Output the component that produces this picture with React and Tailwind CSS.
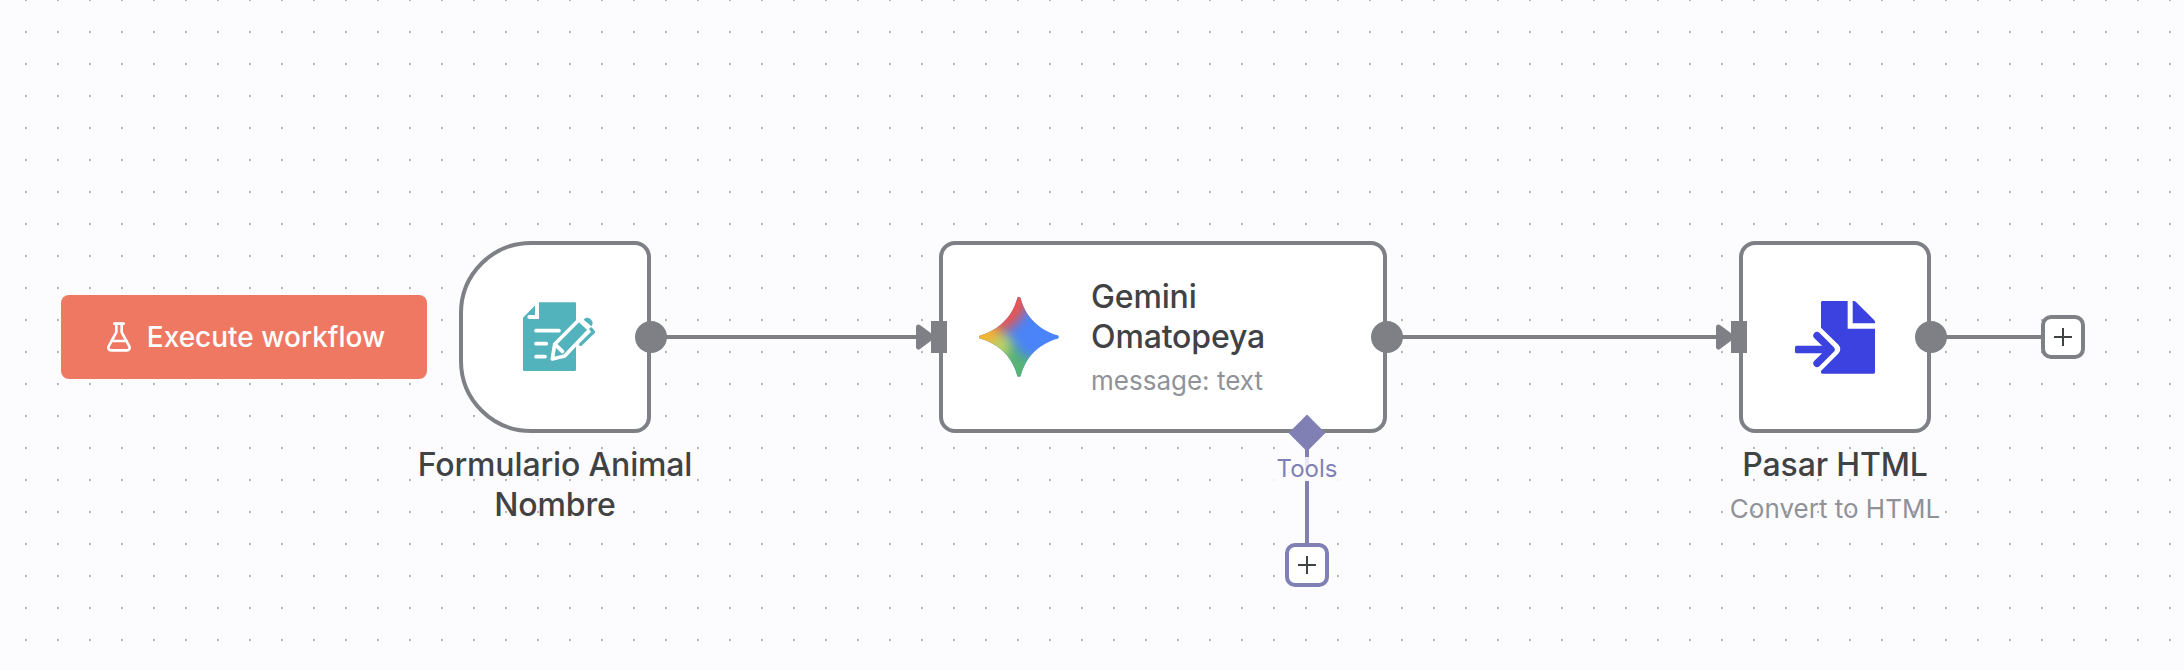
import React from 'react';
import { FlaskConical } from 'lucide-react';

function FormIcon() {
  return (
    <svg className="size-20 shrink-0" viewBox="0 0 240 240" fill="none">
      <path d="M24 62 62 23V16H180q3 0 3 3V218q0 4-4 4H28q-4 0-4-4Z" fill="#53b3bc" />
      <path d="M66 8V60H43" stroke="#fff" strokeWidth="12" strokeLinecap="round" />
      <path d="M63 101H132M63 140H94M63 179H90" stroke="#fff" strokeWidth="11" strokeLinecap="round" />
      <path d="M119 142 192 68 224 98 149 177 112 186Z" fill="#53b3bc" stroke="#fff" strokeWidth="11" strokeLinejoin="round" />
      <path d="M124 146 142 163" stroke="#fff" strokeWidth="12" strokeLinecap="round" />
      <path d="M197 73 217 92" stroke="#fff" strokeWidth="9" />
      <path d="M206 68C212 61 220 61 227 67 234 74 235 81 229 88Z" fill="#53b3bc" />
      <path d="M218 83 229 94 196 131" stroke="#fff" strokeWidth="6" />
      <path d="M228 96 235 105 197 142" stroke="#53b3bc" strokeWidth="10" strokeLinecap="round" strokeLinejoin="round" />
    </svg>
  );
}

function GeminiIcon() {
  return (
    <svg className="size-20 shrink-0" viewBox="0 0 65 65">
      <defs>
        <clipPath id="star">
          <path d="M32.447 0c.68 0 1.273.465 1.439 1.125a38.904 38.904 0 001.999 5.905c2.152 5 5.105 9.376 8.854 13.125 3.751 3.75 8.126 6.703 13.125 8.855a38.98 38.98 0 005.906 1.999c.66.166 1.124.758 1.124 1.438 0 .68-.464 1.273-1.125 1.439a38.902 38.902 0 00-5.905 1.999c-5 2.152-9.375 5.105-13.125 8.854-3.749 3.751-6.702 8.126-8.854 13.125a38.973 38.973 0 00-2 5.906 1.485 1.485 0 01-1.438 1.124c-.68 0-1.272-.464-1.438-1.125a38.913 38.913 0 00-2-5.905c-2.151-5-5.103-9.375-8.854-13.125-3.75-3.749-8.125-6.702-13.125-8.854a38.973 38.973 0 00-5.905-2A1.485 1.485 0 010 32.448c0-.68.465-1.272 1.125-1.438a38.903 38.903 0 005.905-2c5-2.151 9.376-5.104 13.125-8.854 3.75-3.749 6.703-8.125 8.855-13.125a38.972 38.972 0 001.999-5.905A1.485 1.485 0 0132.447 0z" />
        </clipPath>
        <filter id="soft" x="-60%" y="-60%" width="220%" height="220%" colorInterpolationFilters="sRGB">
          <feGaussianBlur stdDeviation="4.500" />
        </filter>
      </defs>
      <g clipPath="url(#star)">
        <rect width="65" height="65" fill="#4a84f8" />
        <g filter="url(#soft)">
          <path d="M12 38 29 38 34 47 46 50V82H5Z" fill="#57b474" />
          <path d="M-10 30H24L27 38 22 48 8 58-10 50Z" fill="#b9d068" />
          <path d="M-14 14 14 20 18 30 10 38-14 50Z" fill="#f3b433" />
          <path d="M8-14H44L38 11 27 25 16 27 8 20Z" fill="#ea554d" />
        </g>
      </g>
    </svg>
  );
}

function FileImportIcon() {
  return (
    <svg className="size-20 shrink-0" viewBox="0 0 240 240" fill="none">
      <path d="M82 12H158V95H240V226q0 4-4 4H82q-4 0-4-4V222L131 169Q141 157 131 144L78 92V16q0-4 4-4Z" fill="#3b42e0" />
      <path d="M173 12H177Q180 12 183 15L238 70Q240 72 240 75V79H173Z" fill="#3b42e0" />
      <rect y="146" width="105" height="23" rx="5" fill="#3b42e0" />
      <path d="M66 116 108 157.500 66 199" stroke="#3b42e0" strokeWidth="22" strokeLinecap="round" strokeLinejoin="round" />
    </svg>
  );
}

function PlusIcon() {
  return (
    <svg className="size-[18px]" viewBox="0 0 18 18">
      <path d="M9 0V18M0 9H18" stroke="#414244" strokeWidth="2" />
    </svg>
  );
}

function Title({ children }) {
  return <div className="text-[32px] leading-10 font-medium tracking-[-0.15px] text-[#414244]">{children}</div>;
}

function Subtitle({ children }) {
  return <div className="mt-2 text-[26px] leading-8 whitespace-nowrap text-[#909298]">{children}</div>;
}

function OutputHandle() {
  return <div className="absolute top-[76px] -right-5 size-8 rounded-full bg-[#7f8086]" />;
}

function InputHandle() {
  return <div className="absolute top-[76px] -left-3 h-8 w-4 bg-[#7f8086]" />;
}

function Edges() {
  return (
    <svg className="absolute inset-0 h-[670px] w-[2184px]" fill="none">
      <g stroke="#7f8086" strokeWidth="4">
        <path d="M651 337H918M1387 337H1718M1931 337H2043" />
      </g>
      <g fill="#7f8086" stroke="#7f8086" strokeWidth="5" strokeLinejoin="round">
        <path d="M918.500 327 932 337 918.500 347Z" />
        <path d="M1718.500 327 1732 337 1718.500 347Z" />
      </g>
    </svg>
  );
}

export default function App() {
  return (
    <div className="relative h-[670px] w-[2184px] overflow-hidden bg-[#fcfcff] font-['Inter',sans-serif]">
      <svg className="absolute inset-0 h-[670px] w-[2184px]">
        <defs>
          <pattern id="dots" x="25" y="-1" width="32" height="32" patternUnits="userSpaceOnUse">
            <rect width="2" height="2" fill="#b5b5b9" />
          </pattern>
        </defs>
        <rect width="2184" height="670" fill="url(#dots)" />
      </svg>
      <Edges />

      <div className="relative flex items-start pt-[241px] pl-[61px]">
        <button className="mt-[54px] flex h-[84px] w-[366px] shrink-0 items-center justify-center gap-3 rounded-lg bg-[#ef7863] text-[28px] font-medium text-white">
          <FlaskConical size={32} />
          <span>Execute workflow</span>
        </button>

        <div className="ml-8 flex w-48 shrink-0 flex-col items-center gap-3">
          <div className="relative flex size-48 items-center justify-center rounded-l-[72px] rounded-r-2xl border-4 border-[#7f8086] bg-white">
            <FormIcon />
            <OutputHandle />
          </div>
          <div className="text-center whitespace-nowrap">
            <Title>Formulario Animal<br />Nombre</Title>
          </div>
        </div>

        <div className="ml-72 flex w-[448px] shrink-0 flex-col">
          <div className="relative flex h-48 items-center gap-8 rounded-2xl border-4 border-[#7f8086] bg-white pl-9">
            <GeminiIcon />
            <div>
              <Title>Gemini<br />Omatopeya</Title>
              <Subtitle>message: text</Subtitle>
            </div>
            <InputHandle />
            <OutputHandle />
          </div>
          <div className="relative -mt-[13px] ml-[328px] flex w-20 flex-col items-center">
            <div className="size-[26px] rotate-45 bg-[#8080b5]" />
            <div className="h-6 w-1 bg-[#8080b5]" />
            <div className="-mt-[13px] w-20 bg-[#fcfcff]/85 text-center text-2xl leading-6 text-[#8080b5]">Tools</div>
            <div className="h-[62px] w-1 bg-[#8080b5]" />
            <button className="flex size-11 items-center justify-center rounded-[10px] border-4 border-[#8080b5] bg-white">
              <PlusIcon />
            </button>
          </div>
        </div>

        <div className="ml-[352px] flex w-48 shrink-0 flex-col items-center gap-3">
          <div className="relative flex size-48 items-center justify-center rounded-2xl border-4 border-[#7f8086] bg-white">
            <FileImportIcon />
            <InputHandle />
            <OutputHandle />
          </div>
          <div className="text-center whitespace-nowrap">
            <Title>Pasar HTML</Title>
            <Subtitle>Convert to HTML</Subtitle>
          </div>
        </div>

        <button className="mt-[74px] ml-[110px] flex size-11 shrink-0 items-center justify-center rounded-[10px] border-4 border-[#7f8086] bg-white">
          <PlusIcon />
        </button>
      </div>
    </div>
  );
}
